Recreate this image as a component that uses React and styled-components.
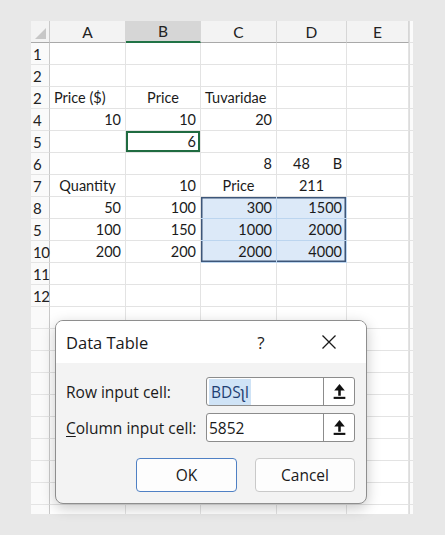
import React from "react";
import styled, { createGlobalStyle, css } from "styled-components";

const GlobalStyle = createGlobalStyle`
  html, body {
    margin: 0;
    padding: 0;
    background: #e8e8e8;
  }
  * { box-sizing: border-box; }
`;

const COLS = [19, 76, 75, 76, 70, 62, 4];

const Page = styled.div`
  width: 445px;
  height: 535px;
  padding: 21px 0 0 31px;
  position: relative;
  overflow: hidden;
`;

const Sheet = styled.div`
  width: 382px;
  height: 493px;
  background: #fff;
  overflow: hidden;
  display: grid;
  grid-template-columns: ${COLS.map((c) => c + "px").join(" ")};
  grid-auto-rows: 22px;
  font-family: Lato, "Open Sans", sans-serif;
  font-size: 14.5px;
  color: #1b1b1b;
`;

const Corner = styled.div`
  background: #f3f3f3;
  border-right: 1px solid #c9c9c9;
  border-bottom: 1px solid #a9a9a9;
  display: flex;
  align-items: flex-end;
  justify-content: flex-end;
  padding: 0 3px 3px 0;
`;

const ColHead = styled.div`
  background: ${({ $active }) => ($active ? "#d6d6d6" : "#f3f3f3")};
  border-right: 1px solid #d6d6d6;
  border-bottom: ${({ $active }) => ($active ? "2px solid #217346" : "1px solid #a9a9a9")};
  display: flex;
  align-items: center;
  justify-content: center;
  font-size: 15.5px;
  color: #222;
`;

const RowHead = styled.div`
  background: #fafafa;
  border-right: 1px solid #c9c9c9;
  border-bottom: 1px solid #e4e4e4;
  display: flex;
  align-items: center;
  padding-left: 2px;
  font-size: 15px;
  color: #222;
  letter-spacing: -0.5px;
`;

const Cell = styled.div`
  border-right: 1px solid #e3e3e3;
  border-bottom: 1px solid #e3e3e3;
  display: flex;
  align-items: center;
  white-space: nowrap;
  overflow: visible;
  padding: 0 4px;
  justify-content: ${({ $align }) =>
    $align === "r" ? "flex-end" : $align === "c" ? "center" : $align === "sb" ? "space-between" : "flex-start"};
  ${({ $sel }) =>
    $sel &&
    css`
      background: #dce9f8;
      border-right-color: #bcd5ef;
      border-bottom-color: #bcd5ef;
    `}
  box-shadow: ${({ $edges }) => $edges || "none"};
`;

const Filler = styled.div`
  border-bottom: 1px solid #e3e3e3;
  border-left: 1px solid #dcdcdc;
  background: #fbfbfb;
`;

const Dialog = styled.div`
  position: absolute;
  left: 55px;
  top: 320px;
  width: 312px;
  height: 184px;
  border: 1px solid #8e8e8e;
  border-radius: 8px;
  background: #f3f3f3;
  box-shadow: 0 4px 14px rgba(0, 0, 0, 0.22);
  overflow: hidden;
  display: flex;
  flex-direction: column;
  font-family: "Open Sans", "Noto Sans", sans-serif;
  color: #1a1a1a;
`;

const TitleBar = styled.div`
  height: 42px;
  background: #fff;
  display: flex;
  align-items: center;
  padding: 0 0 0 10px;
  font-size: 16.5px;
`;

const Title = styled.div`
  flex: 1;
`;

const TitleBtn = styled.div`
  width: ${({ $w }) => $w}px;
  display: flex;
  justify-content: center;
  align-items: center;
  font-size: 17px;
`;

const Body = styled.div`
  flex: 1;
  padding: 14px 11px 0 10px;
  display: flex;
  flex-direction: column;
`;

const FieldRow = styled.div`
  display: flex;
  align-items: center;
  justify-content: space-between;
  margin-bottom: 7px;
  font-size: 15.5px;
`;

const Field = styled.div`
  width: 149px;
  height: 29px;
  border: 1px solid #8c8c8c;
  border-radius: 3px;
  background: #fff;
  display: flex;
`;

const FieldText = styled.div`
  flex: 1;
  display: flex;
  align-items: center;
  padding-left: 2px;
  font-size: 15.5px;
`;

const Picked = styled.span`
  background: #cfe3f6;
  color: #1f3f73;
  padding: 2px 2px 2px 2px;
`;

const PickBtn = styled.div`
  width: 31px;
  border-left: 1px solid #8c8c8c;
  display: flex;
  align-items: center;
  justify-content: center;
`;

const Buttons = styled.div`
  display: flex;
  justify-content: flex-end;
  gap: 18px;
  margin-top: 9px;
`;

const Button = styled.div`
  width: ${({ $w }) => $w}px;
  height: 34px;
  border-radius: 4px;
  background: #fdfdfd;
  border: 1px solid ${({ $primary }) => ($primary ? "#4f80c4" : "#c9c9c9")};
  display: flex;
  align-items: center;
  justify-content: center;
  font-size: 15.5px;
`;

const U = styled.span`
  text-decoration: underline;
  text-underline-offset: 2px;
`;

const UpIcon = () => (
  <svg width="13" height="17" viewBox="0 0 12 16">
    <path d="M6 1 L11 7 H1 Z" fill="#111" />
    <rect x="4.8" y="6" width="2.4" height="6" fill="#111" />
    <rect x="0.5" y="13" width="11" height="2" fill="#111" />
  </svg>
);

const CloseIcon = () => (
  <svg width="16" height="16" viewBox="0 0 16 16">
    <path d="M1.5 1.5 L14.5 14.5 M14.5 1.5 L1.5 14.5" stroke="#1a1a1a" strokeWidth="1.3" />
  </svg>
);

const CornerTri = () => (
  <svg width="11" height="11" viewBox="0 0 11 11">
    <path d="M11 0 V11 H0 Z" fill="#c7c7c7" />
  </svg>
);

const c = (v, align = "r") => ({ v, align });

const ROWS = [
  { n: "1", cells: [] },
  { n: "2", cells: [] },
  { n: "2", cells: [c("Price ($)", "l"), c("Price", "c"), c("Tuvaridae", "l")] },
  { n: "4", cells: [c("10"), c("10"), c("20")] },
  { n: "5", cells: [null, c("6")] },
  { n: "6", cells: [null, null, c("8"), c(["48", "B"], "sb")] },
  { n: "7", cells: [c("Quantity", "c"), c("10"), c("Price", "c"), c("211", "c")] },
  { n: "8", cells: [c("50"), c("100"), c("300"), c("1500")] },
  { n: "5", cells: [c("100"), c("150"), c("1000"), c("2000")] },
  { n: "10", cells: [c("200"), c("200"), c("2000"), c("4000")] },
  { n: "11", cells: [] },
  { n: "12", cells: [] },
];
for (let i = 0; i < 10; i++) ROWS.push({ n: "", cells: [] });

const SEL = "#3d5679";

function edgesFor(r, col) {
  const inSel = r >= 7 && r <= 9 && (col === 2 || col === 3);
  if (r === 4 && col === 1) return { sel: false, edges: "inset 0 0 0 2px #1f6b40" };
  if (!inSel) return { sel: false, edges: null };
  const e = [];
  if (r === 7) e.push(`inset 0 1.5px 0 ${SEL}`);
  if (r === 9) e.push(`inset 0 -1.5px 0 ${SEL}`);
  if (col === 2) e.push(`inset 1.5px 0 0 ${SEL}`);
  if (col === 3) e.push(`inset -1.5px 0 0 ${SEL}`);
  return { sel: true, edges: e.join(", ") || null };
}

export default function App() {
  return (
    <Page>
      <GlobalStyle />
      <Sheet>
        <Corner>
          <CornerTri />
        </Corner>
        {["A", "B", "C", "D", "E"].map((h) => (
          <ColHead key={h} $active={h === "B"}>
            {h}
          </ColHead>
        ))}
        <Filler />
        {ROWS.map((row, r) => (
          <React.Fragment key={r}>
            <RowHead>{row.n}</RowHead>
            {[0, 1, 2, 3, 4].map((col) => {
              const cell = row.cells[col];
              const { sel, edges } = edgesFor(r, col);
              return (
                <Cell key={col} $align={cell?.align} $sel={sel} $edges={edges}>
                  {cell && (Array.isArray(cell.v) ? (
                    <>
                      <span style={{ paddingLeft: 12 }}>{cell.v[0]}</span>
                      <span>{cell.v[1]}</span>
                    </>
                  ) : (
                    cell.v
                  ))}
                </Cell>
              );
            })}
            <Filler />
          </React.Fragment>
        ))}
      </Sheet>

      <Dialog>
        <TitleBar>
          <Title>Data Table</Title>
          <TitleBtn $w={62}>?</TitleBtn>
          <TitleBtn $w={74}>
            <CloseIcon />
          </TitleBtn>
        </TitleBar>
        <Body>
          <FieldRow>
            <span>Row input cell:</span>
            <Field>
              <FieldText>
                <Picked>BDSʅI</Picked>
              </FieldText>
              <PickBtn>
                <UpIcon />
              </PickBtn>
            </Field>
          </FieldRow>
          <FieldRow>
            <span>
              <U>C</U>olumn input cell:
            </span>
            <Field>
              <FieldText>5852</FieldText>
              <PickBtn>
                <UpIcon />
              </PickBtn>
            </Field>
          </FieldRow>
          <Buttons>
            <Button $w={101} $primary>
              OK
            </Button>
            <Button $w={100}>Cancel</Button>
          </Buttons>
        </Body>
      </Dialog>
    </Page>
  );
}
